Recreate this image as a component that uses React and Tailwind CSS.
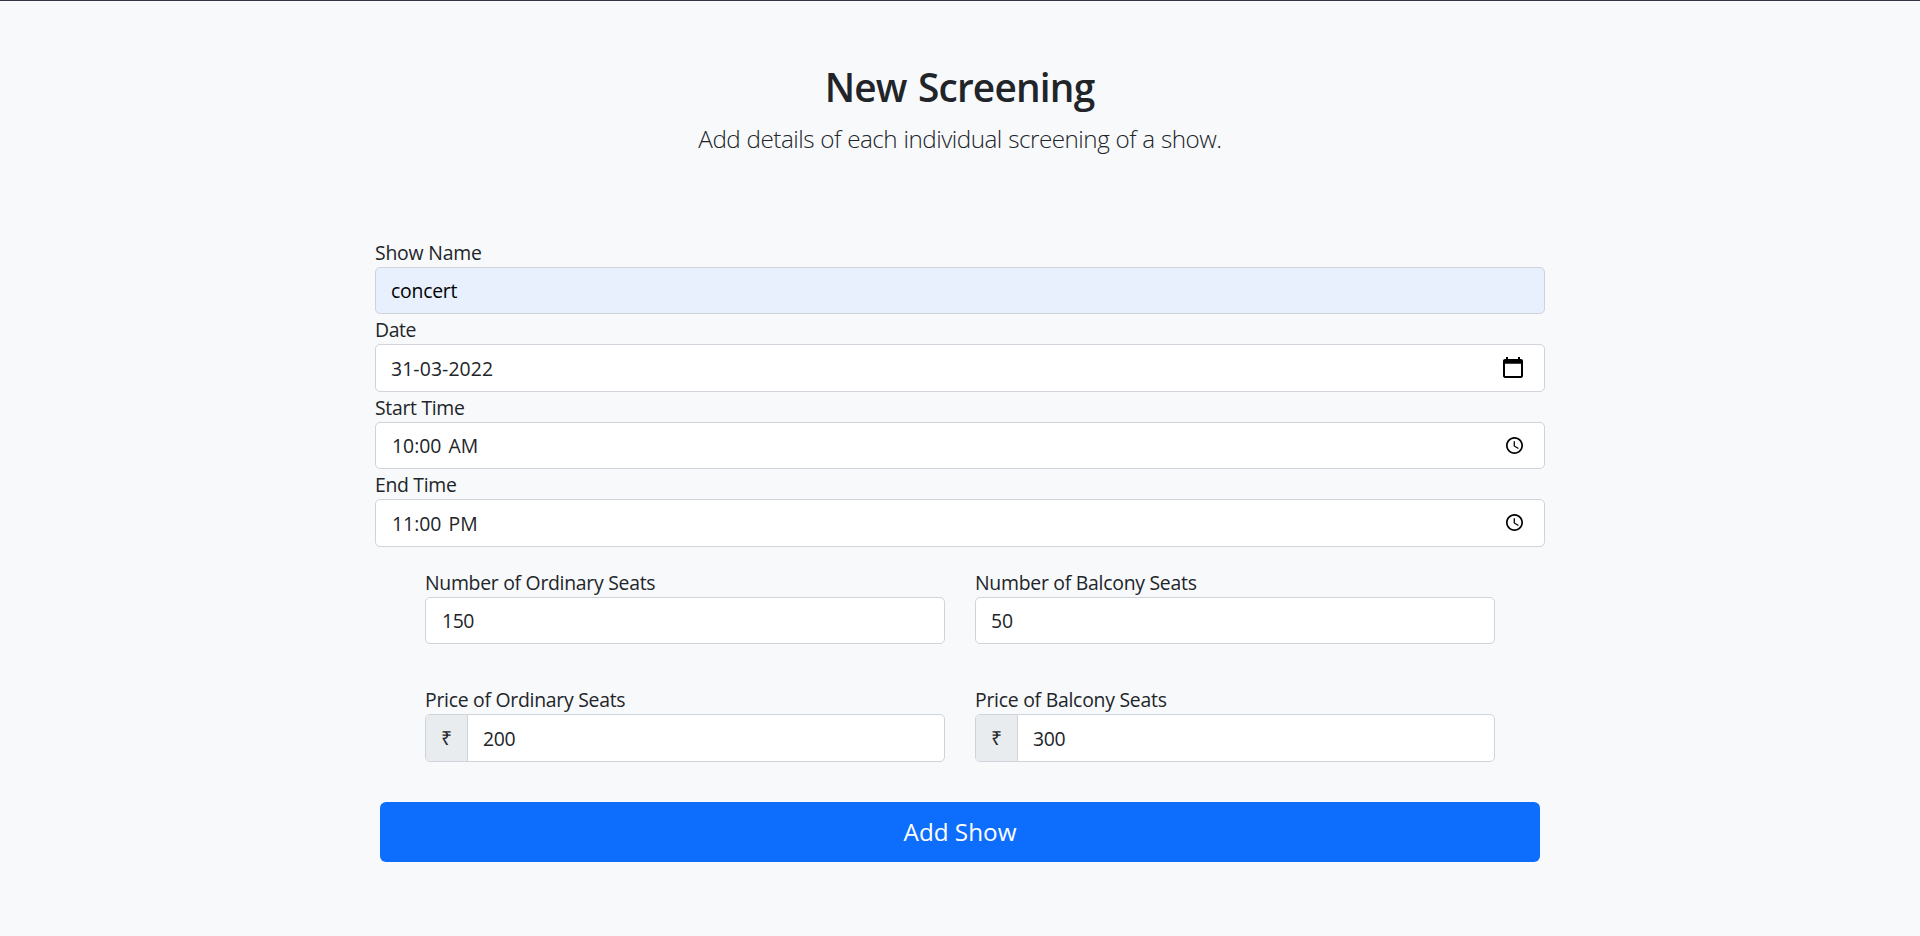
import React from 'react';

function CalendarIcon() {
  return (
    <svg className="h-[21px] w-5 shrink-0" viewBox="2 1 20 22" preserveAspectRatio="none" fill="#000">
      <path d="M20 3h-1V1h-2v2H7V1H5v2H4c-1.1 0-2 .9-2 2v16c0 1.1.9 2 2 2h16c1.1 0 2-.9 2-2V5c0-1.1-.9-2-2-2zm0 18H4V8h16v13z" />
    </svg>
  );
}

function ClockIcon() {
  return (
    <svg className="h-[17px] w-[17px] shrink-0" viewBox="2 2 20 20" fill="#000">
      <path d="M11.99 2C6.47 2 2 6.48 2 12s4.47 10 9.99 10C17.52 22 22 17.52 22 12S17.52 2 11.99 2zM12 20c-4.42 0-8-3.58-8-8s3.58-8 8-8 8 3.58 8 8-3.58 8-8 8z" />
      <path d="M12.5 7H11v6l5.25 3.15.75-1.23-4.5-2.67z" />
    </svg>
  );
}

function Field({ label, labelClass, value, valueClass, boxClass = 'h-[47px] bg-white', icon, iconClass = '', prefix }) {
  return (
    <div className="flex flex-col">
      <div className={`h-[30px] leading-8 ${labelClass}`}>{label}</div>
      <div className={`flex items-center rounded-[5px] border border-[#ced4da] ${boxClass}`}>
        {prefix && (
          <div className="flex h-full w-[42px] shrink-0 items-center justify-center rounded-l-[4px] border-r border-[#ced4da] bg-[#e9ecef]">
            {prefix}
          </div>
        )}
        <div className={`flex-1 ${valueClass}`}>{value}</div>
        {icon && <div className={`pr-[21px] ${iconClass}`}>{icon}</div>}
      </div>
    </div>
  );
}

export default function App() {
  return (
    <div className="h-[936px] overflow-hidden border-t border-[#343541] bg-[#f8f9fb] font-['Open_Sans',sans-serif] text-[19.4px] text-[#212529]">
      <header className="flex flex-col items-center pt-[62px]">
        <h1 className="h-[48px] pr-px text-[38.8px] leading-[48px] font-semibold tracking-[-0.8px] [word-spacing:2px]">
          New Screening
        </h1>
        <p className="mt-[9px] h-[38px] text-[24.25px] leading-[38px] font-light tracking-[-0.5px] [word-spacing:0.5px]">
          Add details of each individual screening of a show.
        </p>
      </header>
      <form className="mx-auto mt-[79px] w-[1170px]">
        <Field
          label="Show Name"
          labelClass="tracking-[-0.2px]"
          value="concert"
          valueClass="pl-[15px] tracking-[-0.23px] text-black"
          boxClass="h-[47px] bg-[#e8f0fe]"
        />
        <Field
          label="Date"
          labelClass="tracking-[-0.4px]"
          value="31-03-2022"
          valueClass="pt-px pl-[15px] tracking-[0.1px]"
          boxClass="h-12 bg-white"
          icon={<CalendarIcon />}
          iconClass="-mt-px"
        />
        <Field
          label="Start Time"
          labelClass="tracking-[-0.3px]"
          value="10:00 AM"
          valueClass="pl-4 [word-spacing:2px]"
          icon={<ClockIcon />}
        />
        <Field
          label="End Time"
          labelClass="tracking-[-0.3px]"
          value="11:00 PM"
          valueClass="pt-px pl-4 [word-spacing:2px]"
          boxClass="h-12 bg-white"
          icon={<ClockIcon />}
          iconClass="-mt-px"
        />
        <div className="mt-5 grid grid-cols-2 gap-x-[30px] gap-y-10 px-[50px]">
          <Field
            label="Number of Ordinary Seats"
            labelClass="tracking-[-0.28px]"
            value="150"
            valueClass="pl-4 tracking-[-0.4px]"
          />
          <Field
            label="Number of Balcony Seats"
            labelClass="tracking-[-0.26px]"
            value="50"
            valueClass="pl-[15px] tracking-[-0.2px]"
          />
          <Field
            label="Price of Ordinary Seats"
            labelClass="tracking-[-0.27px]"
            value="200"
            valueClass="pt-px pl-[15px] tracking-[-0.3px]"
            boxClass="h-12 bg-white"
            prefix="₹"
          />
          <Field
            label="Price of Balcony Seats"
            labelClass="tracking-[-0.25px]"
            value="300"
            valueClass="pt-px pl-[15px] tracking-[-0.3px]"
            boxClass="h-12 bg-white"
            prefix="₹"
          />
        </div>
        <div className="mt-10 px-[5px]">
          <button
            type="button"
            className="flex h-[60px] w-full items-center justify-center rounded-[6px] bg-[#0d6efd] pt-px text-[24.25px] text-white"
          >
            Add Show
          </button>
        </div>
      </form>
    </div>
  );
}
